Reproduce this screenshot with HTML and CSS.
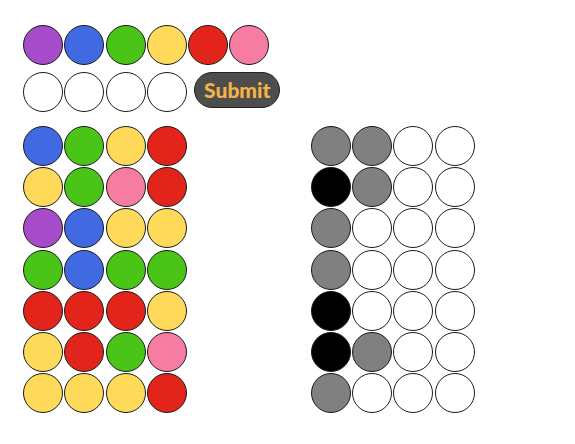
FILE: index.html
```html
<!DOCTYPE html>
<html>
<head>
<meta charset="utf-8">
<link rel="stylesheet" href="styles.css">
</head>
<body>
<div class="app">
  <div class="row palette">
    <span class="peg purple"></span><span class="peg blue"></span><span class="peg green"></span><span class="peg yellow"></span><span class="peg red"></span><span class="peg pink"></span>
  </div>
  <div class="row guess">
    <span class="peg"></span><span class="peg"></span><span class="peg"></span><span class="peg"></span>
    <button class="submit">Submit</button>
  </div>
  <div class="boards">
    <div class="board">
      <div class="row"><span class="peg blue"></span><span class="peg green"></span><span class="peg yellow"></span><span class="peg red"></span></div>
      <div class="row"><span class="peg yellow"></span><span class="peg green"></span><span class="peg pink"></span><span class="peg red"></span></div>
      <div class="row"><span class="peg purple"></span><span class="peg blue"></span><span class="peg yellow"></span><span class="peg yellow"></span></div>
      <div class="row"><span class="peg green"></span><span class="peg blue"></span><span class="peg green"></span><span class="peg green"></span></div>
      <div class="row"><span class="peg red"></span><span class="peg red"></span><span class="peg red"></span><span class="peg yellow"></span></div>
      <div class="row"><span class="peg yellow"></span><span class="peg red"></span><span class="peg green"></span><span class="peg pink"></span></div>
      <div class="row"><span class="peg yellow"></span><span class="peg yellow"></span><span class="peg yellow"></span><span class="peg red"></span></div>
    </div>
    <div class="board">
      <div class="row"><span class="peg gray"></span><span class="peg gray"></span><span class="peg"></span><span class="peg"></span></div>
      <div class="row"><span class="peg black"></span><span class="peg gray"></span><span class="peg"></span><span class="peg"></span></div>
      <div class="row"><span class="peg gray"></span><span class="peg"></span><span class="peg"></span><span class="peg"></span></div>
      <div class="row"><span class="peg gray"></span><span class="peg"></span><span class="peg"></span><span class="peg"></span></div>
      <div class="row"><span class="peg black"></span><span class="peg"></span><span class="peg"></span><span class="peg"></span></div>
      <div class="row"><span class="peg black"></span><span class="peg gray"></span><span class="peg"></span><span class="peg"></span></div>
      <div class="row"><span class="peg gray"></span><span class="peg"></span><span class="peg"></span><span class="peg"></span></div>
    </div>
  </div>
</div>
</body>
</html>
```
FILE: styles.css
```css
html, body {
  margin: 0;
  padding: 0;
  background: #ffffff;
}
body {
  font-family: Lato, "Open Sans", sans-serif;
}
.app {
  padding: 25px 0 0 23px;
}
.row {
  display: flex;
  gap: 1.25px;
  align-items: flex-start;
}
.palette {
  margin-bottom: 6.7px;
}
.peg {
  display: block;
  width: 40px;
  height: 40px;
  box-sizing: border-box;
  border: 1px solid #1a1a1a;
  border-radius: 50%;
  background: #ffffff;
  flex: none;
}
.purple { background: #a64bc9; }
.blue { background: #4169e1; }
.green { background: #4bc418; }
.yellow { background: #ffd95a; }
.red { background: #e3241a; }
.pink { background: #f77ca2; }
.gray { background: #808080; }
.black { background: #000000; }
.guess .peg {
  margin-top: 0.7px;
}
.submit {
  margin-left: 6.3px;
  width: 86px;
  height: 36px;
  box-sizing: border-box;
  border: 1px solid #222222;
  border-radius: 18px;
  background: #4d4d4d;
  color: #f6b246;
  font-family: Lato, "Open Sans", sans-serif;
  font-weight: 900;
  font-size: 21px;
  padding: 0;
  line-height: 34px;
}
.boards {
  display: flex;
  gap: 124px;
  margin-top: 13.7px;
}
.board {
  display: flex;
  flex-direction: column;
  gap: 1.2px;
}
```
